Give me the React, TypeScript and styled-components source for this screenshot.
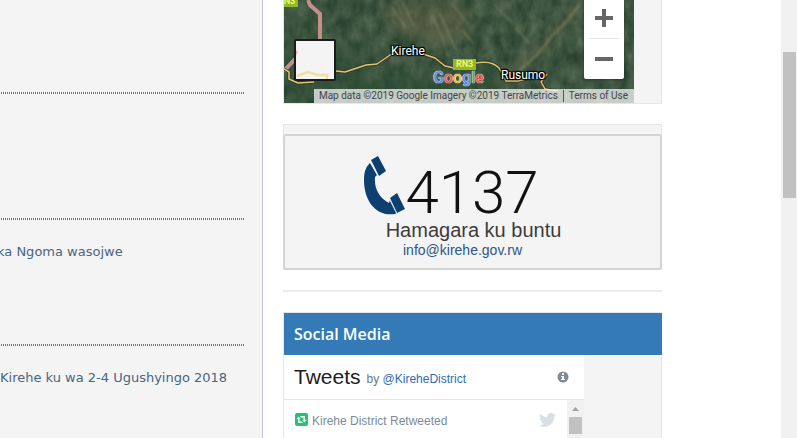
import React from "react";
import styled, { createGlobalStyle } from "styled-components";

const Global = createGlobalStyle`
  * { box-sizing: border-box; }
  body { margin: 0; background: #fff; overflow: hidden; font-family: "Liberation Sans", Arial, sans-serif; }
  a { text-decoration: none; }
`;

const Page = styled.div`
  display: grid;
  grid-template-columns: 263px minmax(0, 1fr) 16px;
  height: 100vh;
  overflow: hidden;
`;

const News = styled.main`
  background: #f4f4f4;
  border-right: 1px solid #c3c5d6;
  padding-right: 18px;
  overflow: hidden;
`;

const NewsItem = styled.article<{ $first?: boolean }>`
  height: ${(p) => (p.$first ? 94 : 126)}px;
  padding-top: 22px;
  background: repeating-linear-gradient(90deg, #f4f4f4 0 1px, #777 1px 2px) bottom / 100% 2px no-repeat;
`;

const NewsLink = styled.a<{ $shift: number }>`
  display: block;
  margin-left: -${(p) => p.$shift}px;
  font: 13px/20px "DejaVu Sans", Verdana, sans-serif;
  color: #4a6580;
  white-space: nowrap;
`;

const Aside = styled.aside`
  padding: 0 119px 0 20px;
  overflow: hidden;
`;

const Panel = styled.section`
  background: #f4f4f4;
  border: 1px solid #e7e7e7;
`;

const MapPanel = styled(Panel)`
  height: 104px;
  border-top: 0;
  padding-right: 27px;
`;

const MapView = styled.div`
  position: relative;
  height: 103px;
  overflow: hidden;
  background: #35503d;
`;

const Terrain = styled.svg`
  display: block;
  width: 100%;
  height: 100%;
`;

const Place = styled.span<{ $x: number; $y: number }>`
  position: absolute;
  left: ${(p) => p.$x}px;
  top: ${(p) => p.$y}px;
  font: 12px/16px Roboto, sans-serif;
  color: #fff;
  text-shadow: 0 0 2px #000, 1px 1px 1px #000, -1px -1px 1px #000, 1px -1px 1px #000, -1px 1px 1px #000;
`;

const Road = styled.span<{ $x: number; $y: number }>`
  position: absolute;
  left: ${(p) => p.$x}px;
  top: ${(p) => p.$y}px;
  padding: 0 3px;
  background: #8fb82a;
  color: #f5f56a;
  font: bold 9px/11px Roboto, sans-serif;
`;

const Logo = styled.span`
  position: absolute;
  left: 149px;
  top: 70px;
  font: 500 16px/16px Roboto, Arial, sans-serif;
  text-shadow: 0 0 1px #fff, 0 0 1px #fff;
`;

const Letter = styled.span<{ $c: string }>`
  color: ${(p) => p.$c};
`;

const MapTypeButton = styled.button`
  position: absolute;
  left: 10px;
  top: 39px;
  width: 42px;
  height: 42px;
  padding: 0;
  border: 2px solid #1b1b1b;
  border-radius: 2px;
  background: #f4f4f4;
`;

const Zoom = styled.div`
  position: absolute;
  right: 10px;
  top: -3px;
  width: 40px;
  padding: 0 5px;
  background: #fff;
  border-radius: 2px;
  box-shadow: 0 1px 3px rgba(0, 0, 0, 0.3);
`;

const ZoomButton = styled.button`
  display: flex;
  align-items: center;
  justify-content: center;
  width: 100%;
  height: 41px;
  padding: 0;
  border: 0;
  background: none;
  & + & { border-top: 1px solid #e6e6e6; }
`;

const Credits = styled.div`
  position: absolute;
  right: 0;
  bottom: 0;
  display: flex;
  align-items: center;
  height: 14px;
  font: 10px/14px Roboto, sans-serif;
  color: #444;
  background: rgba(245, 245, 245, 0.75);
  white-space: nowrap;
`;

const Credit = styled.span`
  padding: 0 5px;
`;

const Terms = styled.a`
  padding: 0 6px 0 5px;
  border-left: 1px solid #555;
  line-height: 12px;
  color: #444;
`;

const CallPanel = styled(Panel)`
  margin-top: 20px;
  padding-top: 9px;
  border-bottom: 0;
`;

const CallCard = styled.div`
  display: flex;
  flex-direction: column;
  align-items: center;
  height: 136px;
  margin: 0 -1px;
  padding: 20px 20px 0 0;
  background: #f4f4f4;
  border: 2px solid #d4d4d4;
  border-radius: 3px;
`;

const CallNumber = styled.div`
  display: flex;
  align-items: flex-start;
  height: 64px;
  margin-right: 32px;
`;

const Digits = styled.span`
  margin: 10px -10px 0 0;
  font: 300 60px/54px Roboto, sans-serif;
  color: #111;
`;

const CallText = styled.div`
  height: 20px;
  margin-left: 22px;
  font: 20px/20px "Liberation Sans", Arial, sans-serif;
  color: #3c3c3c;
`;

const Email = styled.a`
  font: 14px/20px "Liberation Sans", Arial, sans-serif;
  color: #2c5684;
`;

const Divider = styled.hr`
  margin: 20px 0;
  border: 0;
  height: 2px;
  background: #ebebeb;
`;

const Heading = styled.h2`
  margin: 0 -1px 0 0;
  padding: 0 10px;
  font: 600 16px/42px "Open Sans", sans-serif;
  color: #fff;
  background: #337ab7;
`;

const Timeline = styled.div`
  margin-right: 77px;
  background: #fff;
`;

const TimelineHead = styled.header`
  display: flex;
  align-items: center;
  height: 45px;
  padding: 0 15px 0 10px;
  border-bottom: 1px solid #e4e6e8;
`;

const Title = styled.h3`
  margin: 0;
  font: 21px/28px "Liberation Sans", Arial, sans-serif;
  color: #1c2022;
`;

const By = styled.span`
  flex: 1;
  margin-left: 6px;
  padding-top: 4px;
  font-size: 12px;
  line-height: 18px;
  color: #697882;
  a { color: #2b6cb0; }
`;

const Feed = styled.div`
  display: flex;
  height: 60px;
`;

const Retweet = styled.div`
  flex: 1;
  display: flex;
  align-items: flex-start;
  gap: 4px;
  padding: 12px 11px 0 11px;
  font-size: 12px;
  line-height: 18px;
  color: #7b8b96;
  svg { display: block; margin-top: 1px; }
`;

const RetweetLabel = styled.span`
  flex: 1;
`;

const FeedBar = styled.div`
  width: 17px;
  padding: 7px 2px 0;
  background: #f1f1f1;
  svg { display: block; margin: 0 auto 6px; }
`;

const FeedThumb = styled.div`
  height: 17px;
  background: #c1c1c1;
`;

const PageBar = styled.div`
  padding: 52px 1px 0 2px;
  background: #f0f0f0;
`;

const PageThumb = styled.div`
  height: 146px;
  background: #c1c1c1;
`;

const logo: [string, string][] = [["G", "#5b8fe8"], ["o", "#e8564a"], ["o", "#f0bd3a"], ["g", "#5b8fe8"], ["l", "#4cae63"], ["e", "#e8564a"]];

const roadPath = "M0 69L5 72 5 79 14 83 30 82M52 71L61 72 82 65 93 64 106 55Q120 49 136 53L151 58 161 66 170 68M192 63Q208 60 215 68L222 81 234 81 250 77M263 74L257 82 261 89 274 91";

function MapTerrain() {
  return (
    <Terrain viewBox="0 0 350 103" preserveAspectRatio="xMidYMid slice" aria-hidden="true">
      <defs>
        <filter id="ground" x="0" y="0" width="100%" height="100%" colorInterpolationFilters="sRGB">
          <feTurbulence type="fractalNoise" baseFrequency="0.09 0.06" numOctaves="4" seed="8" />
          <feColorMatrix values="0.26 0 0 0 0.11  0.22 0 0 0 0.22  0.2 0 0 0 0.15  0 0 0 0 1" />
        </filter>
        <filter id="soft"><feGaussianBlur stdDeviation="5" /></filter>
        <filter id="ridge"><feGaussianBlur stdDeviation="1" /></filter>
      </defs>
      <rect width="350" height="103" filter="url(#ground)" />
      <g filter="url(#soft)">
        <path d="M0 35L80 55 100 95 0 103Z M60 75L220 65 225 103 60 103Z" fill="#23482f" opacity=".4" />
        <path d="M100 5L175 0 190 30 155 48 105 30Z" fill="#81714f" opacity=".3" />
        <path d="M295 5C285 25 270 35 255 50S225 65 215 88" fill="none" stroke="#9a8866" strokeWidth="6" opacity=".3" />
      </g>
      <g filter="url(#ridge)" fill="none" stroke="#a39672" strokeWidth="2" opacity=".35">
        <path d="M108 8L122 28M118 2L130 26M148 16Q158 34 164 56M156 14L172 50M168 4L184 24M210 4L228 22M232 28L246 44M178 30L190 44" />
        <path d="M296 4L284 20 268 36 254 54 236 70" strokeWidth="3" />
      </g>
      <path d="M24 0L26 5 36 14V40M12 58L0 71" fill="none" stroke="#c19089" strokeWidth="4" />
      <g fill="none" strokeLinejoin="round">
        <path d={roadPath} stroke="#363521" strokeWidth="3" />
        <path d={roadPath} stroke="#dec678" strokeWidth="1.5" />
      </g>
    </Terrain>
  );
}

export default function App() {
  return (
    <>
      <Global />
      <Page>
        <News>
          <NewsItem $first />
          <NewsItem />
          <NewsItem><NewsLink href="#" $shift={3}>ka Ngoma wasojwe</NewsLink></NewsItem>
          <NewsItem><NewsLink href="#" $shift={0}>Kirehe ku wa 2-4 Ugushyingo 2018</NewsLink></NewsItem>
        </News>
        <Aside>
          <MapPanel>
            <MapView>
              <MapTerrain />
              <Road $x={-9} $y={-4}>RN3</Road>
              <Place $x={107} $y={43}>Kirehe</Place>
              <Place $x={217} $y={67}>Rusumo</Place>
              <Road $x={169} $y={59}>RN3</Road>
              <Logo>{logo.map(([l, c], i) => <Letter key={i} $c={c}>{l}</Letter>)}</Logo>
              <MapTypeButton aria-label="Show street map">
                <svg width="38" height="38" viewBox="0 0 38 38" aria-hidden="true">
                  <path d="M1 35L12 31 22 34 31 34 31 38" fill="none" stroke="#f3df9a" strokeWidth="2.5" />
                  <path d="M0 9L2 11 0 15Z" fill="#f3b6a5" />
                </svg>
              </MapTypeButton>
              <Zoom>
                <ZoomButton aria-label="Zoom in">
                  <svg width="18" height="18" viewBox="0 0 18 18"><path d="M7 0h4v7h7v4h-7v7H7v-7H0V7h7Z" fill="#666" /></svg>
                </ZoomButton>
                <ZoomButton aria-label="Zoom out">
                  <svg width="18" height="18" viewBox="0 0 18 18"><path d="M0 7h18v4H0Z" fill="#666" /></svg>
                </ZoomButton>
              </Zoom>
              <Credits>
                <Credit>Map data ©2019 Google Imagery ©2019 TerraMetrics</Credit>
                <Terms href="#">Terms of Use</Terms>
              </Credits>
            </MapView>
          </MapPanel>
          <CallPanel>
            <CallCard>
              <CallNumber>
                <svg width="41" height="60" viewBox="0 0 41 60" aria-hidden="true">
                  <g fill="#0c4070">
                    <path d="M6 7L13 19 11 21C10 32 15 42 25 47L26 44 33 57 31 58C12 61 0 45 0 24 0 15 2 11 6 7Z" />
                    <path d="M7 4L14 0 22 15 15 20ZM26 42L33 37 41 53 33 57Z" />
                  </g>
                  <path d="M6 5L14 20M25 42L33 58" fill="none" stroke="#f4f4f4" strokeWidth="1" />
                </svg>
                <Digits>4137</Digits>
              </CallNumber>
              <CallText>Hamagara ku buntu</CallText>
              <Email href="mailto:info@kirehe.gov.rw">info@kirehe.gov.rw</Email>
            </CallCard>
          </CallPanel>
          <Divider />
          <Panel>
            <Heading>Social Media</Heading>
            <Timeline>
              <TimelineHead>
                <Title>Tweets</Title>
                <By>by <a href="#">@KireheDistrict</a></By>
                <svg width="12" height="12" viewBox="0 0 12 12" aria-label="Twitter Ads info">
                  <circle cx="6" cy="6" r="5.5" fill="#7d8b96" />
                  <path d="M5 2h2v2H5ZM4 5h3v3h1v1H4V8h1V6H4Z" fill="#fff" />
                </svg>
              </TimelineHead>
              <Feed>
                <Retweet>
                  <svg width="13" height="13" viewBox="0 0 13 13" aria-hidden="true">
                    <rect width="13" height="13" rx="2" fill="#22c373" />
                    <path d="M1.5 6L3.5 3.5 5.5 6H4.5V8.5H7L8 10H3.5Q3 10 3 9V6ZM11.5 7L9.500 9.500 7.500 7H8.500V4.500H6L5 3H9.500Q10 3 10 4V7Z" fill="#fff" />
                  </svg>
                  <RetweetLabel>Kirehe District Retweeted</RetweetLabel>
                  <svg width="17" height="14" viewBox="0 0 24 20" aria-hidden="true">
                    <path fill="#d6dfe6" d="M24 2.400c-.9.400-1.800.7-2.800.8 1-.6 1.800-1.600 2.200-2.700-1 .6-2 1-3.100 1.200A4.900 4.900 0 0 0 11.900 6.200C7.700 6 4.100 4 1.700 1 .4 3.200 1 6.100 3.200 7.600c-.8 0-1.600-.2-2.200-.6 0 2.300 1.600 4.400 3.900 4.900-.7.200-1.500.2-2.200.1.600 2 2.400 3.400 4.600 3.400A9.900 9.900 0 0 1 0 17.400 14 14 0 0 0 21.500 5c1-.7 1.800-1.600 2.500-2.600Z" />
                  </svg>
                </Retweet>
                <FeedBar>
                  <svg width="7" height="4" viewBox="0 0 7 4" aria-hidden="true"><path d="M0 4L3.500 0 7 4Z" fill="#a3a3a3" /></svg>
                  <FeedThumb />
                </FeedBar>
              </Feed>
            </Timeline>
          </Panel>
        </Aside>
        <PageBar><PageThumb /></PageBar>
      </Page>
    </>
  );
}
